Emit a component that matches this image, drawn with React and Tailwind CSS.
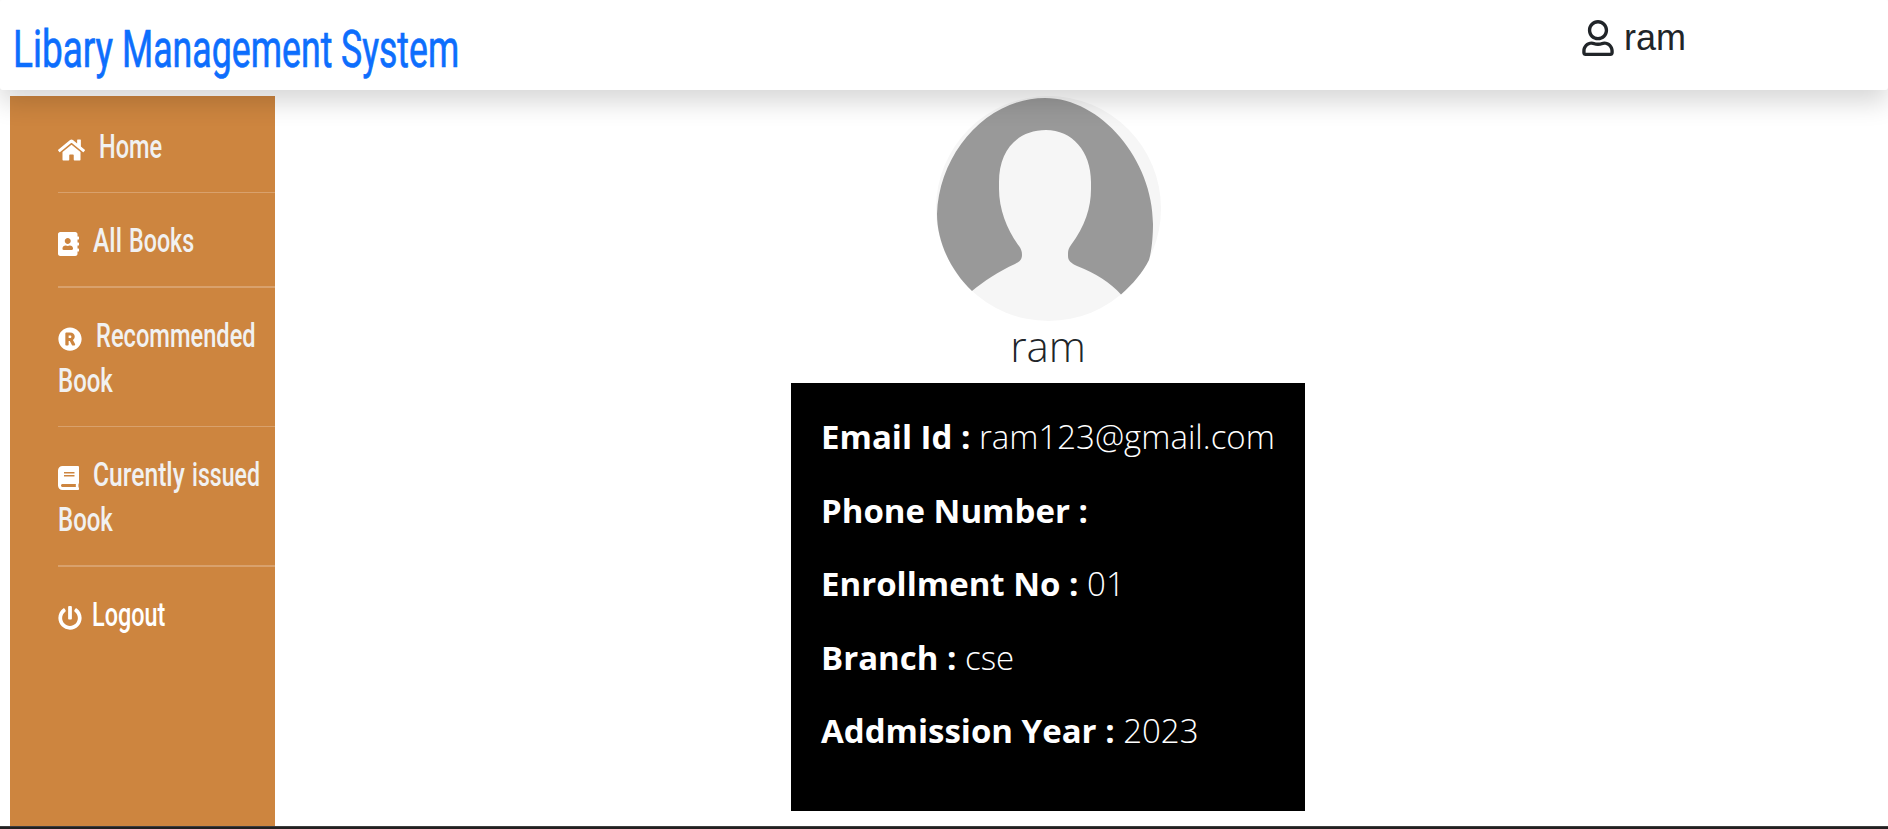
import { useLayoutEffect, useRef, useState } from "react";
import { FaHome, FaAddressBook, FaRegistered, FaBook, FaPowerOff, FaRegUser } from "react-icons/fa";

// Narrows a word horizontally so that it fills the given width.
function Condensed({ width, children }) {
  const ref = useRef(null);
  const [scale, setScale] = useState(1);
  useLayoutEffect(() => {
    setScale(width / ref.current.offsetWidth);
  }, [width]);
  return (
    <span className="block shrink-0 whitespace-nowrap" style={{ width }}>
      <span ref={ref} className="inline-block origin-left" style={{ transform: `scaleX(${scale})` }}>
        {children}
      </span>{" "}
    </span>
  );
}

function Words({ words, className }) {
  return (
    <span className={`flex ${className}`}>
      {words.map(([text, width]) => (
        <Condensed key={text} width={width}>{text}</Condensed>
      ))}
    </span>
  );
}

const menu = [
  { icon: FaHome, words: [["Home", 63]], size: "w-[27px]", gap: "ml-[14px]", box: "h-[97px] pt-[28px] border-b" },
  { icon: FaAddressBook, words: [["All", 29], ["Books", 65]], size: "w-[21px]", gap: "ml-[14px]", box: "h-[95px] pt-[25px] border-b-2" },
  { icon: FaRegistered, words: [["Recommended", 160]], size: "w-[24px]", gap: "ml-[14px]", second: "Book", box: "h-[139px] pt-[25px] border-b" },
  { icon: FaBook, words: [["Curently", 92], ["issued", 68]], size: "w-[21px]", gap: "ml-[14px]", second: "Book", box: "h-[140px] pt-[25px] border-b-2" },
  { icon: FaPowerOff, words: [["Logout", 73]], size: "w-[24px]", gap: "ml-[10px]", box: "h-[95px] pt-[25px]", bright: true },
];

const details = [
  ["Email Id :", "ram123@gmail.com"],
  ["Phone Number :", ""],
  ["Enrollment No :", "01"],
  ["Branch :", "cse"],
  ["Addmission Year :", "2023"],
];

function Avatar() {
  return (
    <svg viewBox="0 0 225 225" preserveAspectRatio="none" className="block h-[225px] w-[225px]">
      <circle cx="112.5" cy="112.5" r="112.5" fill="#f6f6f6" />
      <path
        fill="#999999"
        d="M109 2C165 2 217 64 217 128C217 139 216 154 213 164C207 176 197 188 185 198.500C175 187 159 177 141 170C135 167 132 165 132 160V157C132 154 133 152 135 149C149 130 155 112 155 93V86C155 55 136 34 110 34C81 34 63 55 63 86V93C63 113 71 134 83 150C85 153 86 155 86 159C86 164 83 166 79 168C63 175 47 186 36 195C15 175 1 146 1 118C3 57 51 2 109 2Z"
      />
    </svg>
  );
}

export default function App() {
  return (
    <div className="flex h-[829px] w-full flex-col overflow-hidden bg-white font-['Open_Sans',sans-serif]">
      <header className="relative z-10 flex h-[90px] shrink-0 justify-between rounded-[3px] bg-white pl-[13px] shadow-[0_12px_26px_rgba(0,0,0,0.16)]">
        <h1 className="pt-[20px] font-['Roboto',sans-serif] text-[51px] leading-[60px] font-normal text-[#0d6efd] [-webkit-text-stroke:0.7px_#0d6efd]">
          <Words className="gap-[9px]" words={[["Libary", 100], ["Management", 210], ["System", 118]]} />
        </h1>
        <div className="flex h-[75px] w-[306px] items-center gap-[10px] text-[#212529]">
          <FaRegUser className="h-[36px] w-[32px]" />
          <span className="pt-px font-['Liberation_Sans',Arial,sans-serif] text-[36px] leading-[42px]">ram</span>
        </div>
      </header>

      <div className="flex min-h-0 flex-1 pt-[6px] pl-[10px]">
        <nav className="w-[265px] shrink-0 bg-[#cd853f] pl-[48px] font-['Roboto',sans-serif] text-[34px] leading-[45px] font-medium text-[#f1f1f1]">
          <ul>
            {menu.map(({ icon: Icon, words, size, gap, second, box, bright }) => (
              <li key={words[0][0]} className={`border-[#d9a16c] ${box}`}>
                <div className={`flex h-[45px] items-center ${bright ? "text-white" : ""}`}>
                  <Icon className={`mt-[6px] h-[24px] shrink-0 text-white ${size}`} />
                  <Words className={`gap-[7px] ${gap}`} words={words} />
                </div>
                {second && <Condensed width={55}>{second}</Condensed>}
              </li>
            ))}
          </ul>
        </nav>

        <main className="flex flex-1 flex-col items-center pr-[67px]">
          <Avatar />
          <h2 className="h-[62px] text-[42px] leading-[50px] font-light text-[#212529]">ram</h2>
          <section className="h-[428px] w-[514px] shrink-0 bg-black pt-[31px] pl-[30px] text-[33px] leading-[46px] text-white">
            {details.map(([name, value]) => (
              <p key={name} className="h-[73.5px] whitespace-nowrap font-light">
                <b className="font-bold">{name}</b> {value}
              </p>
            ))}
          </section>
        </main>
      </div>
      <footer className="h-[3px] shrink-0 border-t border-[#3d3d3d] bg-[#222020]" />
    </div>
  );
}
